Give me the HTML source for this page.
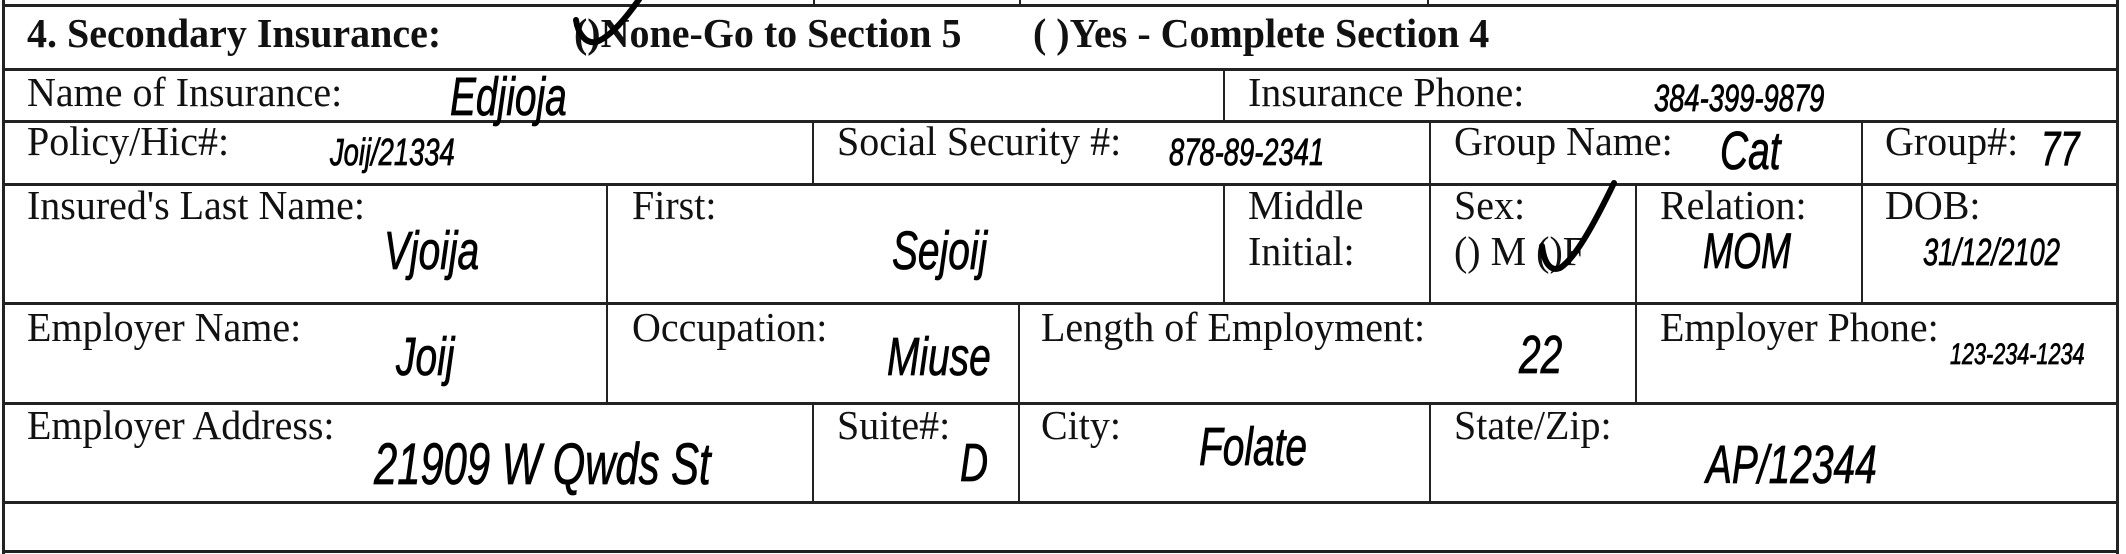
<!DOCTYPE html>
<html><head><meta charset="utf-8"><style>
html,body{margin:0;padding:0;background:#fff;}
body{width:2126px;height:554px;position:relative;overflow:hidden;}
.h,.v{position:absolute;background:#222;}
.h{height:3px;}
.v{width:2px;}
.t{position:absolute;font-family:"Liberation Serif",serif;font-size:41px;color:#111;white-space:nowrap;line-height:1;transform:scaleX(0.975);transform-origin:left top;}
.b{font-weight:bold;}
.w{position:absolute;font-family:"Liberation Sans",sans-serif;font-style:italic;color:#000;white-space:nowrap;line-height:1;transform:scaleX(0.72);transform-origin:left top;-webkit-text-stroke:0.8px #000;}
</style></head><body>
<div class="h" style="left:3px;width:2116px;top:4px"></div>
<div class="h" style="left:3px;width:2116px;top:68px"></div>
<div class="h" style="left:3px;width:2116px;top:120px"></div>
<div class="h" style="left:3px;width:2116px;top:183px"></div>
<div class="h" style="left:3px;width:2116px;top:302px"></div>
<div class="h" style="left:3px;width:2116px;top:402px"></div>
<div class="h" style="left:3px;width:2116px;top:501px"></div>
<div class="h" style="left:3px;width:2116px;top:550px"></div>
<div class="v" style="left:2px;top:0;height:554px;width:3px"></div>
<div class="v" style="left:2116px;top:0;height:554px;width:3px"></div>
<div class="v" style="left:813px;top:0;height:5px"></div>
<div class="v" style="left:1019px;top:0;height:5px"></div>
<div class="v" style="left:1427px;top:0;height:5px"></div>
<div class="v" style="left:1223px;top:69px;height:52px"></div>
<div class="v" style="left:812px;top:121px;height:63px"></div>
<div class="v" style="left:1429px;top:121px;height:63px"></div>
<div class="v" style="left:1861px;top:121px;height:63px"></div>
<div class="v" style="left:606px;top:184px;height:119px"></div>
<div class="v" style="left:1223px;top:184px;height:119px"></div>
<div class="v" style="left:1429px;top:184px;height:119px"></div>
<div class="v" style="left:1635px;top:184px;height:119px"></div>
<div class="v" style="left:1861px;top:184px;height:119px"></div>
<div class="v" style="left:606px;top:303px;height:100px"></div>
<div class="v" style="left:1018px;top:303px;height:100px"></div>
<div class="v" style="left:1635px;top:303px;height:100px"></div>
<div class="v" style="left:812px;top:403px;height:99px"></div>
<div class="v" style="left:1018px;top:403px;height:99px"></div>
<div class="v" style="left:1429px;top:403px;height:99px"></div>

<div class="t b" style="left:27px;top:13px">4. Secondary Insurance:</div>
<div class="t b" style="left:574px;top:13px">()None-Go to Section 5</div>
<div class="t b" style="left:1033px;top:13px">( )Yes - Complete Section 4</div>

<div class="t" style="left:27px;top:72px">Name of Insurance:</div>
<div class="w" style="left:450px;top:70px;font-size:54px">Edjioja</div>
<div class="t" style="left:1248px;top:72px">Insurance Phone:</div>
<div class="w" style="left:1654px;top:80px;font-size:38px">384-399-9879</div>

<div class="t" style="left:27px;top:121px">Policy/Hic#:</div>
<div class="w" style="left:330px;top:134px;font-size:38px">Joij/21334</div>
<div class="t" style="left:837px;top:121px">Social Security #:</div>
<div class="w" style="left:1169px;top:134px;font-size:38px">878-89-2341</div>
<div class="t" style="left:1454px;top:121px">Group Name:</div>
<div class="w" style="left:1720px;top:124px;font-size:54px">Cat</div>
<div class="t" style="left:1885px;top:121px">Group#:</div>
<div class="w" style="left:2041px;top:126px;font-size:48px">77</div>

<div class="t" style="left:27px;top:185px">Insured's Last Name:</div>
<div class="w" style="left:384px;top:224px;font-size:54px">Vjoija</div>
<div class="t" style="left:632px;top:185px">First:</div>
<div class="w" style="left:892px;top:224px;font-size:54px">Sejoij</div>
<div class="t" style="left:1248px;top:185px">Middle</div>
<div class="t" style="left:1248px;top:231px">Initial:</div>
<div class="t" style="left:1454px;top:185px">Sex:</div>
<div class="t" style="left:1454px;top:231px">() M ()F</div>
<div class="t" style="left:1660px;top:185px">Relation:</div>
<div class="w" style="left:1703px;top:226px;font-size:50px">MOM</div>
<div class="t" style="left:1885px;top:185px">DOB:</div>
<div class="w" style="left:1923px;top:234px;font-size:38px">31/12/2102</div>

<div class="t" style="left:27px;top:307px">Employer Name:</div>
<div class="w" style="left:396px;top:330px;font-size:54px">Joij</div>
<div class="t" style="left:632px;top:307px">Occupation:</div>
<div class="w" style="left:887px;top:330px;font-size:54px">Miuse</div>
<div class="t" style="left:1041px;top:307px">Length of Employment:</div>
<div class="w" style="left:1519px;top:328px;font-size:54px">22</div>
<div class="t" style="left:1660px;top:307px">Employer Phone:</div>
<div class="w" style="left:1950px;top:340px;font-size:30px">123-234-1234</div>

<div class="t" style="left:27px;top:405px">Employer Address:</div>
<div class="w" style="left:374px;top:436px;font-size:58px">21909 W Qwds St</div>
<div class="t" style="left:837px;top:405px">Suite#:</div>
<div class="w" style="left:960px;top:436px;font-size:54px">D</div>
<div class="t" style="left:1041px;top:405px">City:</div>
<div class="w" style="left:1199px;top:420px;font-size:54px">Folate</div>
<div class="t" style="left:1454px;top:405px">State/Zip:</div>
<div class="w" style="left:1706px;top:438px;font-size:54px">AP/12344</div>

<svg style="position:absolute;left:0;top:0" width="2126" height="554">
<path d="M576 20 C578 34 586 44 596 42 C608 38 622 24 640 -2" fill="none" stroke="#000" stroke-width="6" stroke-linecap="round"/>
<path d="M1542 246 C1544 262 1550 272 1560 268 C1576 258 1596 220 1614 183" fill="none" stroke="#000" stroke-width="6" stroke-linecap="round"/>
</svg>
</body></html>
